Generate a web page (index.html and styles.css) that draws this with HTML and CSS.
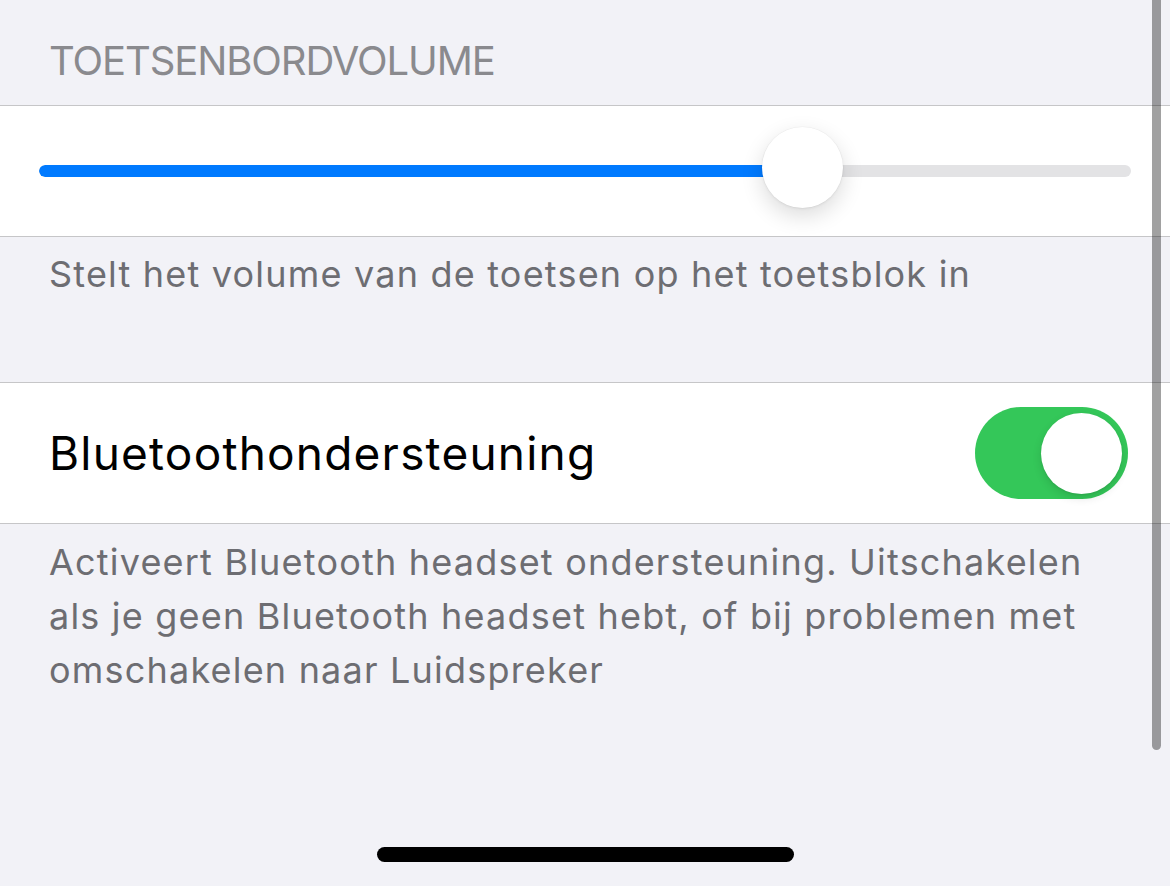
FILE: index.html
```html
<!DOCTYPE html>
<html lang="nl">
<head>
<meta charset="utf-8">
<title>Instellingen</title>
<link rel="stylesheet" href="styles.css">
</head>
<body>
<main class="screen">
  <div class="section-header">TOETSENBORDVOLUME</div>
  <div class="cell slider-cell">
    <div class="slider">
      <div class="track">
        <div class="fill" style="width: 69.9%"></div>
      </div>
      <div class="thumb" style="left: 69.9%"></div>
    </div>
  </div>
  <div class="section-footer first">Stelt het volume van de toetsen op het toetsblok in</div>
  <div class="cell toggle-cell">
    <span class="label">Bluetoothondersteuning</span>
    <div class="switch on"><div class="knob"></div></div>
  </div>
  <div class="section-footer second">Activeert Bluetooth headset ondersteuning. Uitschakelen als je geen Bluetooth headset hebt, of bij problemen met omschakelen naar Luidspreker</div>
  <div class="scrollbar"></div>
  <div class="home-indicator"></div>
</main>
</body>
</html>
```

FILE: styles.css
```css
* { box-sizing: border-box; }
html, body { margin: 0; padding: 0; }
body {
  background: #f2f2f7;
  font-family: Inter, "Noto Sans", "Liberation Sans", sans-serif;
  -webkit-font-smoothing: antialiased;
}
.screen {
  position: relative;
  width: 1170px;
  height: 886px;
  overflow: hidden;
  background: #f2f2f7;
}
.section-header {
  padding: 37px 49px 20px;
  font-size: 40px;
  line-height: 48px;
  color: #8a8a8e;
  letter-spacing: -1.1px;
}
.cell {
  background: #fff;
  border-top: 1px solid #c6c6c8;
  border-bottom: 1px solid #c6c6c8;
}
.slider-cell {
  height: 132px;
  padding: 59px 39px 0;
}
.slider {
  position: relative;
  height: 12px;
}
.track {
  height: 12px;
  border-radius: 6px;
  background: #e3e3e5;
  overflow: hidden;
}
.fill {
  height: 100%;
  background: #007aff;
  border-radius: 6px 0 0 6px;
}
.thumb {
  position: absolute;
  top: -38px;
  width: 81px;
  height: 81px;
  margin-left: -40px;
  border-radius: 50%;
  background: #fff;
  box-shadow: 0 8px 22px rgba(0, 0, 0, 0.14), 0 1px 3px rgba(0, 0, 0, 0.06), 0 0 0 0.5px rgba(0, 0, 0, 0.04);
}
.section-footer {
  font-size: 36px;
  line-height: 54px;
  color: #6d6d72;
  letter-spacing: 1.2px;
  padding: 0 49px;
}
.section-footer.first {
  padding-top: 10px;
  padding-bottom: 81px;
}
.section-footer.second {
  padding-top: 11px;
}
.toggle-cell {
  height: 142px;
  display: flex;
  align-items: center;
  justify-content: space-between;
  padding: 0 42px 0 49px;
}
.label {
  font-size: 46px;
  line-height: 56px;
  letter-spacing: 1.2px;
  color: #000;
}
.switch {
  position: relative;
  width: 153px;
  height: 92px;
  border-radius: 46px;
  background: #e9e9eb;
}
.switch.on { background: #34c759; }
.knob {
  position: absolute;
  top: 6px;
  right: 6px;
  width: 81px;
  height: 81px;
  border-radius: 50%;
  background: #fff;
  box-shadow: 0 4px 10px rgba(0, 0, 0, 0.12), 0 1px 2px rgba(0, 0, 0, 0.08);
}
.scrollbar {
  position: absolute;
  top: -10px;
  left: 1152px;
  width: 9px;
  height: 760px;
  border-radius: 5px;
  background: rgba(0, 0, 0, 0.37);
}
.home-indicator {
  position: absolute;
  left: 377px;
  top: 847px;
  width: 417px;
  height: 15px;
  border-radius: 8px;
  background: #000;
}
```
